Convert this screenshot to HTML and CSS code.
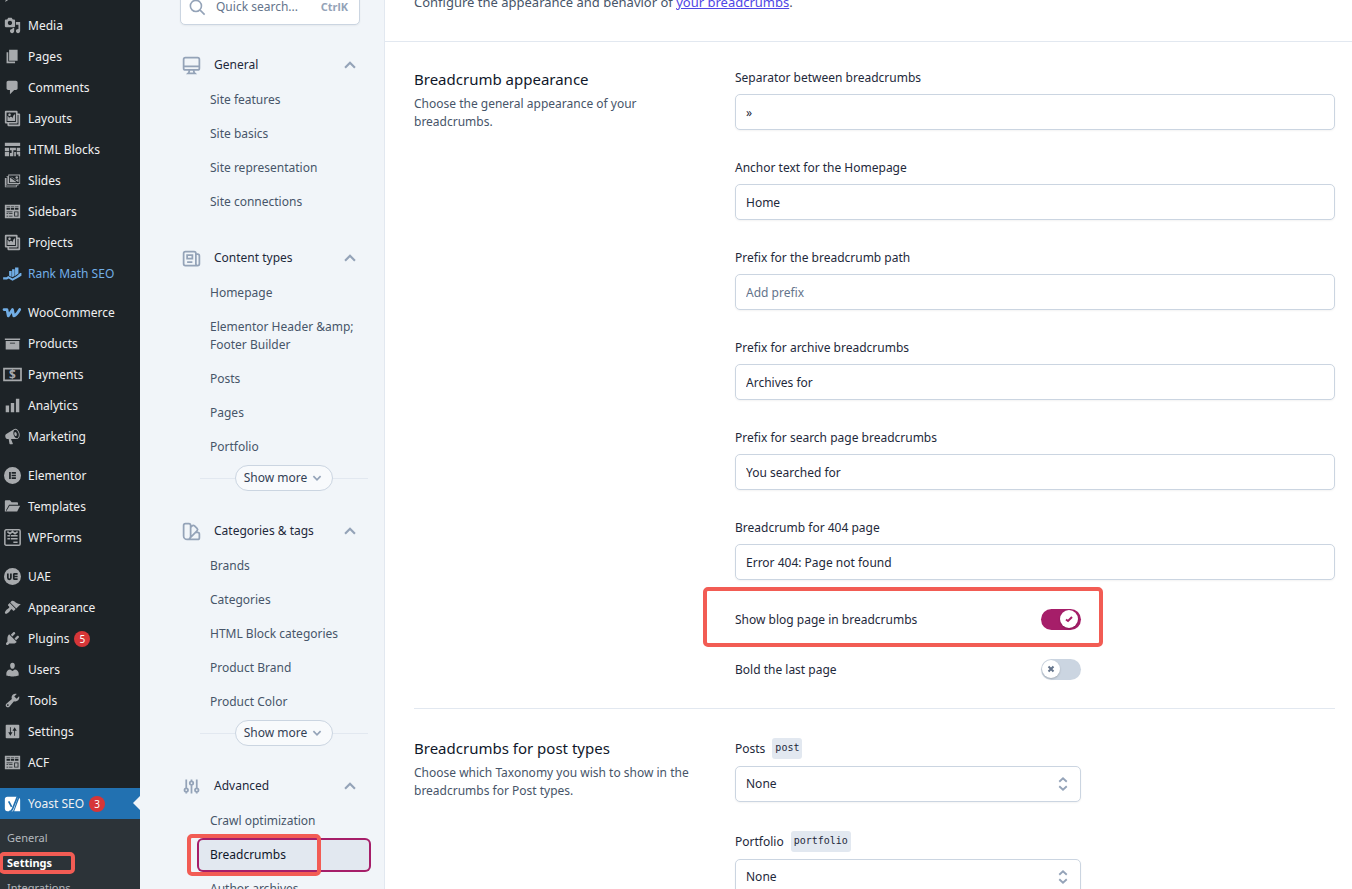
FILE: index.html
```html
<!DOCTYPE html>
<html lang="en">

<head>
  <meta charset="UTF-8" />
  <meta name="viewport" content="width=device-width, initial-scale=1.0" />
  <title>Breadcrumbs - Yoast SEO</title>
  <link rel="stylesheet" href="styles.css">
</head>

<body>
  <!-- shared icons -->
  <svg class="sprite" aria-hidden="true">
    <symbol id="i-gallery" viewBox="0 0 20 20"><path d="M16 4h1.96c.57 0 1.04.47 1.04 1.04v12.92c0 .57-.47 1.04-1.04 1.04H5.04C4.47 19 4 18.53 4 17.96V16H2.04C1.47 16 1 15.53 1 14.96V2.04C1 1.47 1.47 1 2.04 1h12.92c.57 0 1.04.47 1.04 1.04V4zM3 14h11V3H3v11zm5-8.5C8 4.67 7.33 4 6.5 4S5 4.67 5 5.5 5.67 7 6.5 7 8 6.33 8 5.5zm2 4.5s1-5 3-5v8H4V7c2 0 2 3 2 3s.33-2 2-2 2 2 2 2zm7 7V6h-1v8.96c0 .57-.47 1.04-1.04 1.04H6v1h11z" /></symbol>
    <symbol id="i-table" viewBox="0 0 20 20"><path fill-rule="evenodd" d="M1 2h18v16H1V2zm2 2v1h4V4H3zm5 0v1h4V4H8zm5 0v1h4V4h-4zM3 6v2h4V6H3zm5 0v2h4V6H8zm5 0v2h4V6h-4zM3 10v1h7v-1H3zm9 0v6h5v-6h-5zm1 1h3v4h-3v-4zM3 12v1h2v-1H3zm3 0v1h4v-1H6zm-3 3v1h2v-1H3zm3 0v1h4v-1H6z" /></symbol>
    <symbol id="i-up" viewBox="0 0 20 20"><path d="M4.5 13L10 7.5l5.500 5.500" fill="none" stroke="currentColor" stroke-width="2.400" /></symbol>
    <symbol id="i-down" viewBox="0 0 20 20"><path d="M4 7l6 6 6-6" fill="none" stroke="currentColor" stroke-width="2.800" /></symbol>
    <symbol id="i-selector" viewBox="0 0 24 24"><path d="M7 9l5-4.500 5 4.500m0 6l-5 4.500-5-4.500" fill="none" stroke="currentColor" stroke-width="2.500" /></symbol>
  </svg>

  <div class="screen">
    <nav class="admin-menu" aria-label="Main menu">
      <ul class="menu-group">
        <li><a href="#"><svg viewBox="0 0 20 20"><path d="M10.440 3.020l1.820-1.820 6.360 6.350-1.830 1.820c-1.050-.68-2.480-.57-3.410.36l-.75.75c-.92.93-1.040 2.350-.35 3.410l-1.830 1.820-2.410-2.410-2.800 2.790c-.42.42-3.380 2.710-3.800 2.290s1.860-3.390 2.280-3.810l2.790-2.790L4.100 9.360l1.830-1.820c1.050.69 2.480.57 3.400-.36l.75-.75c.93-.92 1.050-2.350.36-3.410z" /></svg>Posts</a></li>
        <li><a href="#"><svg viewBox="0 0 20 20"><path d="M13 11V4c0-.55-.45-1-1-1h-1.670L9 1H5L3.670 3H2c-.55 0-1 .45-1 1v7c0 .55.45 1 1 1h10c.55 0 1-.45 1-1zM7 4.500c1.380 0 2.500 1.120 2.500 2.500S8.380 9.500 7 9.500 4.500 8.380 4.500 7 5.620 4.500 7 4.500zM14 6h5v10.500c0 1.380-1.120 2.500-2.500 2.500S14 17.880 14 16.500s1.120-2.500 2.500-2.500c.17 0 .34.02.5.05V9h-3V6zm-4 8.050V13h2v3.500c0 1.380-1.120 2.500-2.500 2.500S7 17.880 7 16.500 8.120 14 9.500 14c.17 0 .34.02.5.05z" /></svg>Media</a></li>
        <li><a href="#"><svg viewBox="0 0 20 20"><path d="M6 15V2h10v13H6zm-1 1h8v2H3V5h2v11z" /></svg>Pages</a></li>
        <li><a href="#"><svg viewBox="0 0 20 20"><path d="M5 2h9c1.100 0 2 .9 2 2v7c0 1.100-.9 2-2 2h-2l-5 5v-5H5c-1.100 0-2-.9-2-2V4c0-1.100.9-2 2-2z" /></svg>Comments</a></li>
        <li><a href="#"><svg><use href="#i-gallery" /></svg>Layouts</a></li>
        <li><a href="#"><svg viewBox="0 0 20 20"><path d="M1 2h18v4H1zM1 8h5v4H1zM1 13h5v5H1zM7 8h7v3h-3v7H7v-4h2v-3H7zM15 8h4v4h-4zM12 13h2v5h-2zM15 13h4v5h-2v-2h-2z" /></svg>HTML Blocks</a></li>
        <li><a href="#"><svg viewBox="0 0 20 20"><path fill-rule="evenodd" d="M5 3h14v11h-2v2h-2v2H1V7h2V5h2V3zm1 1v9h12V4H6zM4 6v8h12v1H3V6h1zM2 8v9h12v-1H2z" /><path d="M7 5l10 7V8.500c-1.500 0-2 .8-3 .8L10 6.500zM7 6.500V12h8z" /><circle cx="15" cy="6.500" r="1.500" /></svg>Slides</a></li>
        <li><a href="#"><svg><use href="#i-table" /></svg>Sidebars</a></li>
        <li><a href="#"><svg><use href="#i-gallery" /></svg>Projects</a></li>
        <li><a href="#" class="accent"><svg viewBox="0 0 20 20"><path d="M6 7h3v7l-3-1.500zM9.500 5h3v8l-3 1.500zM13 3h4v7l-4 3zM-1 14.500h4l2-1.500 5 3 5-3 4-3.500h1.500v3L15 16l-5 2.500L5.500 16l-2 1H-1z" /></svg>Rank Math SEO</a></li>
      </ul>
      <ul class="menu-group">
        <li><a href="#"><svg class="accent" viewBox="0 0 20 20"><path d="M0 6.500h3.500L5 14l5-7.500L11.500 14c3-1 5-4 7-7.500" fill="none" stroke="currentColor" stroke-width="3.200" stroke-linejoin="round" stroke-linecap="round" /></svg>WooCommerce</a></li>
        <li><a href="#"><svg viewBox="0 0 20 20"><path d="M19 4v2H1V4h18zM2 7h16v10H2V7zm11 3V9H7v1h6z" /></svg>Products</a></li>
        <li><a href="#"><svg viewBox="0 0 20 20"><path d="M0 3h20v14H0z" fill="none" stroke="currentColor" stroke-width="2" /><text x="10" y="15" text-anchor="middle" class="dollar">$</text></svg>Payments</a></li>
        <li><a href="#"><svg viewBox="0 0 20 20"><path d="M18 18V2h-4v16h4zm-6 0V7H8v11h4zm-6 0v-8H2v8h4z" /></svg>Analytics</a></li>
        <li><a href="#"><svg viewBox="0 0 20 20"><path d="M18.150 5.940c.46 1.620.38 3.220-.02 4.480-.42 1.280-1.260 2.180-2.300 2.480-.16.06-.26.06-.4.06-.06.02-.12.02-.18.02-.06.02-.14.02-.22.02h-6.800l2.220 5.500c.02.14-.06.26-.14.34-.08.1-.24.16-.34.16H6.950c-.1 0-.26-.06-.34-.16-.08-.08-.16-.2-.14-.34l-1-5.500H4.250l-.02-.02c-.5.06-1.080-.18-1.540-.62s-.88-1.080-1.060-1.880c-.24-.8-.2-1.560-.02-2.200.18-.62.58-1.080 1.060-1.300l.02-.02 9-5.400c.1-.06.18-.1.24-.16.06-.04.14-.08.24-.12.16-.08.28-.12.5-.18 1.040-.3 2.240.1 3.220.98s1.840 2.240 2.260 3.860zm-2.580 5.980h-.02c.4-.1.74-.34 1.040-.7.58-.7.86-1.760.86-3.040 0-.64-.1-1.300-.28-1.980-.34-1.360-1.020-2.500-1.780-3.240s-1.680-1.100-2.460-.88c-.82.22-1.400.96-1.700 2-.32 1.040-.28 2.360.06 3.720.38 1.360 1 2.500 1.800 3.240.78.74 1.620 1.100 2.480.88zm-2.540-7.080c.22-.04.42-.02.62.04.38.16.76.48 1.020 1s.42 1.200.42 1.780c0 .3-.04.56-.12.8-.18.48-.44.84-.86.94-.34.1-.8-.06-1.140-.4s-.64-.86-.78-1.500c-.18-.62-.12-1.240.02-1.720s.48-.84.82-.94z" /></svg>Marketing</a></li>
      </ul>
      <ul class="menu-group">
        <li><a href="#"><svg viewBox="0 0 20 20"><path fill-rule="evenodd" d="M10 0a10 10 0 110 20 10 10 0 010-20zM6 6v8h2V6H6zm3 0v2h5V6H9zm0 3v2h5V9H9zm0 3v2h5v-2H9z" /></svg>Elementor</a></li>
        <li><a href="#"><svg viewBox="0 0 20 20"><path d="M1 16V4c0-1 .5-1.500 1.500-1.500H7L9 5h6c1 0 1.500.5 1.500 1.500V8H6L2.500 14v2zM6.500 9H19l-3.500 7H2.500z" /></svg>Templates</a></li>
        <li><a href="#"><svg viewBox="0 0 20 20"><path d="M2.500 1h15c.8 0 1.500.7 1.500 1.500v15c0 .8-.7 1.500-1.500 1.500h-15c-.8 0-1.500-.7-1.500-1.500v-15C1 1.700 1.700 1 2.500 1zM4 3l3 2.500L10 3l3 2.500L16 3M4 8h3M8 8h8M4 11.500h3M8 11.500h8M11 15.500h5" fill="none" stroke="currentColor" stroke-width="1.800" /></svg>WPForms</a></li>
      </ul>
      <ul class="menu-group">
        <li><a href="#"><svg viewBox="0 0 20 20"><circle cx="10" cy="10" r="10" /><path d="M4.500 6.500v5a1.800 1.800 0 003.600 0v-5M11.500 6.500v7M11.500 7H16M11.500 10H16M11.500 13H16" fill="none" class="knockout" /></svg>UAE</a></li>
        <li><a href="#"><svg viewBox="0 0 20 20"><path d="M14.480 11.060L7.410 3.990l1.500-1.500c.5-.56 2.300-.47 3.510.32 1.210.8 1.430 1.280 2.910 2.100 1.180.64 2.450 1.260 4.450.85zm-.71.71L6.700 4.700 4.930 6.470c-.39.39-.39 1.020 0 1.410l1.060 1.060c.39.39.39 1.030 0 1.420-.6.6-1.430 1.110-2.210 1.690-.35.26-.7.53-1.010.84C1.430 14.230.4 16.080 1.400 17.070c.99 1 2.840-.03 4.180-1.360.31-.31.58-.66.85-1.020.57-.78 1.080-1.610 1.690-2.210.39-.39 1.020-.39 1.410 0l1.060 1.060c.39.39 1.020.39 1.410 0z" /></svg>Appearance</a></li>
        <li><a href="#"><svg viewBox="0 0 20 20"><path d="M13.110 4.360L9.870 7.600 8 5.730l3.240-3.240c.35-.34 1.050-.2 1.560.32.52.51.66 1.210.31 1.550zm-8 1.770l.91-1.120 9.010 9.010-1.190.84c-.71.71-2.630 1.160-3.820 1.160H6.140L4.900 17.260c-.59.59-1.540.59-2.120 0-.59-.58-.59-1.530 0-2.120l1.240-1.240v-3.880c0-1.130.4-3.190 1.090-3.890zm7.260 3.970l3.240-3.240c.34-.35 1.040-.21 1.550.31.52.51.66 1.210.31 1.550l-3.240 3.250z" /></svg>Plugins <span class="count">5</span></a></li>
        <li><a href="#"><svg viewBox="0 0 20 20"><path d="M10 9.250c-2.270 0-2.730-3.440-2.730-3.440C7 4.020 7.820 2 9.970 2c2.160 0 2.980 2.020 2.710 3.810 0 0-.41 3.440-2.680 3.440zm0 2.570L12.720 10c2.390 0 4.520 2.330 4.520 4.530v2.490s-3.650 1.130-7.240 1.130c-3.650 0-7.240-1.130-7.240-1.130v-2.490c0-2.250 1.940-4.480 4.470-4.480z" /></svg>Users</a></li>
        <li><a href="#"><svg viewBox="0 0 20 20"><path d="M16.680 9.770c-1.340 1.340-3.300 1.670-4.950.99l-5.410 6.520c-.99.99-2.590.99-3.580 0s-.99-2.590 0-3.570l6.520-5.420c-.68-1.650-.35-3.610.99-4.950 1.280-1.280 3.120-1.620 4.720-1.060l-2.890 2.890 2.820 2.820 2.860-2.870c.53 1.580.18 3.390-1.080 4.650zM3.810 16.210c.4.39 1.040.39 1.430 0 .4-.4.4-1.040 0-1.430-.39-.4-1.030-.4-1.430 0-.39.39-.39 1.030 0 1.430z" /></svg>Tools</a></li>
        <li><a href="#"><svg viewBox="0 0 20 20"><path fill-rule="evenodd" d="M18 17V3c0-.55-.45-1-1-1H3c-.55 0-1 .45-1 1v14c0 .55.45 1 1 1h14c.55 0 1-.45 1-1zM8 11h2l-2.500 4L5 11h2V5h1zm5-2v6h-1V9h-2l2.500-4L15 9z" /></svg>Settings</a></li>
        <li><a href="#"><svg><use href="#i-table" /></svg>ACF</a></li>
      </ul>
      <ul class="menu-group current">
        <li><a href="#"><svg viewBox="0 0 20 20"><path d="M4 2h12.500L12 16l-1.500 3H4c-2 0-3-1-3-3V5c0-2 1-3 3-3zM18 3.500c.7.500 1 1.200 1 2V19h-7z" /><path d="M5.500 7.500L9 14M16.500 0L10 16.500c-.8 2-2 3-4 3" fill="none" class="yoast-y" /></svg>Yoast SEO <span class="count">3</span></a></li>
      </ul>
      <ul class="submenu">
        <li><a href="#">General</a></li>
        <li class="active marked"><a href="#">Settings</a></li>
        <li><a href="#">Integrations</a></li>
      </ul>
    </nav>

    <aside class="sidebar">
      <button type="button" class="search">
        <svg viewBox="0 0 24 24"><path d="M21 21l-6-6m2-5a7 7 0 11-14 0 7 7 0 0114 0z" /></svg>
        <span>Quick search...</span>
        <kbd>CtrlK</kbd>
      </button>

      <section class="nav-section">
        <button type="button" class="nav-head"><svg viewBox="0 0 24 24"><path d="M9.750 17L9 20l-1 1h8l-1-1-.75-3M3 13h18M5 17h14a2 2 0 002-2V5a2 2 0 00-2-2H5a2 2 0 00-2 2v10a2 2 0 002 2z" /></svg><span>General</span><svg class="chevron"><use href="#i-up" /></svg></button>
        <ul>
          <li><a href="#">Site features</a></li>
          <li><a href="#">Site basics</a></li>
          <li><a href="#">Site representation</a></li>
          <li><a href="#">Site connections</a></li>
        </ul>
      </section>

      <section class="nav-section">
        <button type="button" class="nav-head"><svg viewBox="0 0 24 24"><path d="M19 20H5a2 2 0 01-2-2V6a2 2 0 012-2h10a2 2 0 012 2v1m2 13a2 2 0 01-2-2V7m2 13a2 2 0 002-2V9a2 2 0 00-2-2h-2m-4-3H9M7 16h6M7 8h6v4H7V8z" /></svg><span>Content types</span><svg class="chevron"><use href="#i-up" /></svg></button>
        <ul>
          <li><a href="#">Homepage</a></li>
          <li><a href="#">Elementor Header &amp;amp; Footer Builder</a></li>
          <li><a href="#">Posts</a></li>
          <li><a href="#">Pages</a></li>
          <li><a href="#">Portfolio</a></li>
        </ul>
        <div class="more"><button type="button">Show more <svg><use href="#i-down" /></svg></button></div>
      </section>

      <section class="nav-section">
        <button type="button" class="nav-head"><svg viewBox="0 0 24 24"><path d="M7 21a4 4 0 01-4-4V5a2 2 0 012-2h4a2 2 0 012 2v12a4 4 0 01-4 4zm0 0h12a2 2 0 002-2v-4a2 2 0 00-2-2h-2.343M11 7.343l1.657-1.657a2 2 0 012.828 0l2.829 2.829a2 2 0 010 2.828l-8.486 8.485M7 17h.01" /></svg><span>Categories &amp; tags</span><svg class="chevron"><use href="#i-up" /></svg></button>
        <ul>
          <li><a href="#">Brands</a></li>
          <li><a href="#">Categories</a></li>
          <li><a href="#">HTML Block categories</a></li>
          <li><a href="#">Product Brand</a></li>
          <li><a href="#">Product Color</a></li>
        </ul>
        <div class="more"><button type="button">Show more <svg><use href="#i-down" /></svg></button></div>
      </section>

      <section class="nav-section">
        <button type="button" class="nav-head"><svg viewBox="0 0 24 24"><path d="M12 6V4m0 2a2 2 0 100 4m0-4a2 2 0 110 4m-6 8a2 2 0 100-4m0 4a2 2 0 110-4m0 4v2m0-6V4m6 6v10m6-2a2 2 0 100-4m0 4a2 2 0 110-4m0 4v2m0-6V4" /></svg><span>Advanced</span><svg class="chevron"><use href="#i-up" /></svg></button>
        <ul>
          <li><a href="#">Crawl optimization</a></li>
          <li class="selected marked"><a href="#">Breadcrumbs</a></li>
          <li><a href="#">Author archives</a></li>
        </ul>
      </section>
    </aside>

    <main class="content">
      <header class="intro">
        <p>Configure the appearance and behavior of <a href="#">your breadcrumbs</a>.</p>
      </header>

      <section class="settings">
        <div class="about">
          <h2>Breadcrumb appearance</h2>
          <p>Choose the general appearance of your breadcrumbs.</p>
        </div>
        <div class="fields">
          <div class="field">
            <label for="separator">Separator between breadcrumbs</label>
            <input type="text" id="separator" value="»" />
          </div>
          <div class="field">
            <label for="anchor">Anchor text for the Homepage</label>
            <input type="text" id="anchor" value="Home" />
          </div>
          <div class="field">
            <label for="prefix">Prefix for the breadcrumb path</label>
            <input type="text" id="prefix" placeholder="Add prefix" />
          </div>
          <div class="field">
            <label for="archive">Prefix for archive breadcrumbs</label>
            <input type="text" id="archive" value="Archives for" />
          </div>
          <div class="field">
            <label for="searchPrefix">Prefix for search page breadcrumbs</label>
            <input type="text" id="searchPrefix" value="You searched for" />
          </div>
          <div class="field">
            <label for="notFound">Breadcrumb for 404 page</label>
            <input type="text" id="notFound" value="Error 404: Page not found" />
          </div>
          <div class="toggle-row marked">
            <label for="blogPage">Show blog page in breadcrumbs</label>
            <span class="toggle">
              <input type="checkbox" role="switch" id="blogPage" checked />
              <svg viewBox="0 0 12 12"><path d="M3 6.500L5 8l4-4" /></svg>
            </span>
          </div>
          <div class="toggle-row">
            <label for="boldLast">Bold the last page</label>
            <span class="toggle">
              <input type="checkbox" role="switch" id="boldLast" />
              <svg viewBox="0 0 12 12"><path d="M3.500 3.500l5 5m0-5l-5 5" /></svg>
            </span>
          </div>
        </div>
      </section>

      <section class="settings post-types">
        <div class="about">
          <h2>Breadcrumbs for post types</h2>
          <p>Choose which Taxonomy you wish to show in the breadcrumbs for Post types.</p>
        </div>
        <div class="fields">
          <div class="field">
            <label for="posts">Posts <code>post</code></label>
            <div class="select">
              <select id="posts"><option>None</option></select>
              <svg><use href="#i-selector" /></svg>
            </div>
          </div>
          <div class="field">
            <label for="portfolio">Portfolio <code>portfolio</code></label>
            <div class="select">
              <select id="portfolio"><option>None</option></select>
              <svg><use href="#i-selector" /></svg>
            </div>
          </div>
        </div>
      </section>
    </main>
  </div>
</body>

</html>
```
FILE: styles.css
```css
* {
  box-sizing: border-box;
}

body {
  margin: 0;
  font-family: "Noto Sans", "Open Sans", sans-serif;
  font-size: 12px;
  line-height: 18px;
  color: #1e293b;
  background: #fff;
}

ul {
  list-style: none;
  margin: 0;
  padding: 0;
}

a {
  text-decoration: none;
}

button,
input,
select {
  font: inherit;
  color: inherit;
}

button {
  cursor: pointer;
}

.sprite {
  display: none;
}

.screen {
  display: flex;
  height: 100vh;
  overflow: hidden;
}

/* admin menu */
.admin-menu {
  flex: 0 0 140px;
  margin-top: -21px;
  background: #1d2327;
}

.menu-group {
  margin-bottom: 8px;
}

.menu-group a {
  display: flex;
  align-items: center;
  height: 31px;
  padding-left: 4px;
  color: #f0f0f1;
  white-space: nowrap;
}

.menu-group svg {
  width: 17px;
  height: 17px;
  margin-right: 7px;
  fill: currentColor;
  color: #a7aaad;
  overflow: visible;
}

.menu-group .accent,
.menu-group .accent svg {
  color: #72aee6;
}

.dollar {
  font-size: 14px;
  font-weight: bold;
}

.knockout {
  stroke: #1d2327;
  stroke-width: 2;
}

.count {
  width: 16px;
  height: 16px;
  margin-left: 5px;
  border-radius: 50%;
  background: #d63638;
  color: #fff;
  font-size: 10px;
  line-height: 16px;
  text-align: center;
}

.menu-group.current {
  position: relative;
  margin: 10px 0 0;
  background: #2271b1;
}

.menu-group.current::after {
  content: "";
  position: absolute;
  top: 8px;
  right: 0;
  border: 7px solid transparent;
  border-left: 0;
  border-right-color: #f1f5f9;
}

.menu-group.current svg {
  color: #fff;
}

.yoast-y {
  stroke: #2271b1;
  stroke-width: 2;
}

.submenu {
  padding: 6px 0 20px;
  background: #2c3338;
  font-size: 11px;
}

.submenu a {
  display: block;
  padding: 4px 7px 3px;
  color: #b4b9be;
}

.submenu .active a {
  color: #fff;
  font-weight: bold;
}

/* red highlight frames */
.marked {
  position: relative;
}

.marked::after {
  content: "";
  position: absolute;
  border: 4px solid #f25c54;
  border-radius: 5px;
  pointer-events: none;
}

.submenu .marked::after {
  top: 2px;
  bottom: 1px;
  left: -1px;
  right: 65px;
}

/* settings navigation */
.sidebar {
  flex: 0 0 245px;
  padding: 0 13px 0 40px;
  background: #f1f5f9;
  border-right: 1px solid #e2e8f0;
}

.search {
  display: flex;
  align-items: center;
  width: 180px;
  height: 36px;
  margin: -11px 0 22px;
  padding: 0 11px 0 7px;
  border: 1px solid #cbd5e1;
  border-radius: 5px;
  background: #fff;
  box-shadow: 0 1px 2px #0000000d;
  color: #64748b;
}

.search svg {
  width: 19px;
  height: 19px;
  margin-right: 9px;
  fill: none;
  stroke: #94a3b8;
  stroke-width: 2;
}

.search kbd {
  margin-left: auto;
  color: #94a3b8;
  font-family: inherit;
  font-size: 11px;
  font-weight: bold;
}

.nav-section {
  margin-bottom: 21px;
}

.nav-head {
  display: flex;
  align-items: center;
  width: 100%;
  height: 36px;
  padding: 0 12px 0 1px;
  border: 0;
  background: none;
}

.nav-head svg {
  width: 21px;
  height: 21px;
  margin-right: 12px;
  fill: none;
  stroke: #94a3b8;
  stroke-width: 2;
}

.nav-head .chevron {
  width: 18px;
  height: 18px;
  margin: 0 0 0 auto;
  color: #94a3b8;
}

.nav-section li {
  margin-left: 17px;
}

.nav-section li a {
  display: block;
  padding: 8px 13px;
  color: #475569;
}

.nav-section .selected a {
  border-radius: 6px;
  background: #e2e8f0;
  box-shadow: inset 0 0 0 2px #a61e69;
  color: #0f172a;
}

.nav-section .marked::after {
  top: -4px;
  bottom: -4px;
  left: -10px;
  right: 50px;
}

.more {
  display: flex;
  align-items: center;
  height: 28px;
  margin: 0 3px 0 20px;
}

.more::before,
.more::after {
  content: "";
  flex: 1;
  height: 1px;
  background: #e2e8f0;
}

.more button {
  display: flex;
  align-items: center;
  height: 26px;
  padding: 0 9px 0 8px;
  border: 1px solid #cbd5e1;
  border-radius: 13px;
  background: #f8fafc;
  color: #334155;
}

.more svg {
  width: 12px;
  height: 12px;
  margin-left: 4px;
  color: #94a3b8;
}

/* main column */
.content {
  flex: 1;
  min-width: 0;
}

.intro {
  margin-top: -7px;
  padding: 0 29px 30px;
  border-bottom: 1px solid #e2e8f0;
  color: #475569;
  font-size: 13px;
}

.intro p {
  margin: 0;
}

.intro a {
  color: #4f46e5;
  text-decoration: underline;
}

.settings {
  display: grid;
  grid-template-columns: repeat(3, minmax(0, 1fr));
  column-gap: 42px;
  margin: 0 17px 0 29px;
  padding: 27px 0 28px;
}

.post-types {
  padding-top: 29px;
  border-top: 1px solid #e2e8f0;
}

.about h2 {
  margin: 0 0 6px;
  color: #0f172a;
  font-size: 15px;
  font-weight: 400;
  line-height: 20px;
}

.about p {
  margin: 0;
  color: #475569;
}

.fields {
  grid-column: span 2;
  display: flex;
  flex-direction: column;
  gap: 29px;
}

.field label {
  display: flex;
  align-items: center;
  margin-bottom: 7px;
}

.field code {
  height: 21px;
  margin-left: 7px;
  padding: 0 3px;
  border-radius: 3px;
  background: #e2e8f0;
  font-family: "DejaVu Sans Mono", monospace;
  font-size: 10px;
  line-height: 20px;
}

.field input,
.field select {
  display: block;
  width: 100%;
  height: 36px;
  padding: 0 10px;
  border: 1px solid #cbd5e1;
  border-radius: 5px;
  background: #fff;
  box-shadow: 0 1px 2px #0000000d;
}

.field input::placeholder {
  color: #64748b;
}

.select,
.toggle-row {
  position: relative;
  max-width: 346px;
}

.field select {
  appearance: none;
}

.select svg {
  position: absolute;
  top: 9px;
  right: 9px;
  width: 18px;
  height: 18px;
  color: #94a3b8;
  pointer-events: none;
}

.toggle-row {
  display: flex;
  align-items: center;
  justify-content: space-between;
  height: 21px;
}

.toggle-row.marked::after {
  top: -22px;
  bottom: -17px;
  left: -32px;
  right: -22px;
}

.toggle {
  position: relative;
  width: 40px;
  height: 21px;
}

.toggle input {
  display: block;
  appearance: none;
  width: 40px;
  height: 21px;
  margin: 0;
  border-radius: 11px;
  background: #cbd5e1;
}

.toggle svg {
  position: absolute;
  top: 1px;
  left: 1px;
  width: 18px;
  height: 18px;
  padding: 3px;
  border-radius: 50%;
  background: #fff;
  box-shadow: 0 1px 2px #0003;
  fill: none;
  stroke: #64748b;
  stroke-width: 2;
  pointer-events: none;
}

.toggle input:checked {
  background: #a61e69;
}

.toggle input:checked + svg {
  left: 19px;
  stroke: #a61e69;
}
```
